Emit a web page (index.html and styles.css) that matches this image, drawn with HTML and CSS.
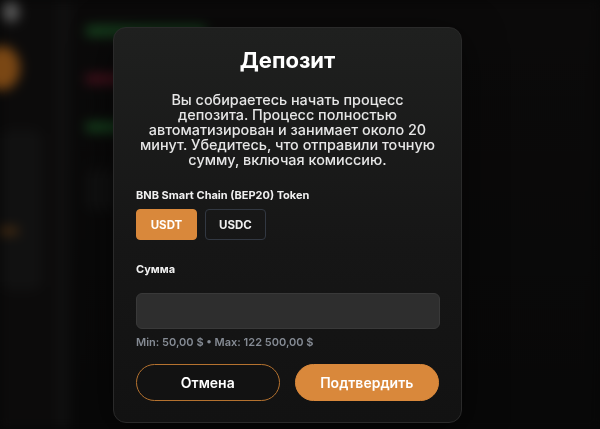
FILE: index.html
```html
<!DOCTYPE html>
<html lang="ru">
<head>
<meta charset="utf-8">
<title>Депозит</title>
<link rel="stylesheet" href="styles.css">
</head>
<body>
<div class="app">
  <aside class="sidebar">
    <div class="avatar"></div>
    <div class="coin"></div>
    <div class="side-card">
      <div class="side-dash"></div>
    </div>
  </aside>
  <div class="divider"></div>
  <main class="main">
    <div class="bar bar-green"></div>
    <div class="bar bar-red"></div>
    <div class="bar bar-green"></div>
    <div class="ghost-box"></div>
  </main>
</div>

<div class="overlay">
  <section class="modal">
    <h1 class="modal-title">Депозит</h1>
    <p class="modal-text">Вы собираетесь начать процесс депозита. Процесс полностью автоматизирован и занимает около 20 минут. Убедитесь, что отправили точную сумму, включая комиссию.</p>

    <div class="field-label">BNB Smart Chain (BEP20) Token</div>
    <div class="token-row">
      <button class="token token-active">USDT</button>
      <button class="token">USDC</button>
    </div>

    <div class="field-label sum-label">Сумма</div>
    <input class="amount" type="text" value="">
    <div class="limits">Min: 50,00 $ • Max: 122 500,00 $</div>

    <div class="actions">
      <button class="btn btn-cancel">Отмена</button>
      <button class="btn btn-confirm">Подтвердить</button>
    </div>
  </section>
</div>
</body>
</html>
```

FILE: styles.css
```css
* { box-sizing: border-box; }

html, body {
  margin: 0;
  padding: 0;
  width: 600px;
  height: 429px;
  overflow: hidden;
  background: #070707;
  font-family: Inter, "Noto Sans", "Liberation Sans", sans-serif;
}

/* blurred page behind the modal */
.app {
  display: flex;
  width: 600px;
  height: 429px;
  filter: blur(6px);
  background: linear-gradient(180deg, #0b0a0a 0%, #080808 100%);
}

.sidebar {
  width: 58px;
  flex: none;
  display: flex;
  flex-direction: column;
  background: #0c0b0b;
}

.avatar {
  width: 16px;
  height: 20px;
  margin: 2px 0 0 3px;
  border-radius: 8px;
  background: #5a5a5a;
}

.coin {
  width: 36px;
  height: 44px;
  margin: 24px 0 0 -16px;
  border-radius: 50%;
  background: #7a4714;
}

.side-card {
  width: 42px;
  height: 160px;
  margin-top: 40px;
  border-radius: 10px;
  background: #111111;
  padding-top: 98px;
}

.side-dash {
  width: 18px;
  height: 6px;
  background: #553312;
}

.divider {
  width: 12px;
  flex: none;
  background: #101010;
}

.main {
  flex: 1;
  display: flex;
  flex-direction: column;
  padding: 26px 0 0 16px;
  gap: 38px;
}

.bar {
  width: 120px;
  height: 10px;
  border-radius: 3px;
}

.bar-green { background: #17461f; }
.bar-red { background: #48111d; }

.ghost-box {
  width: 30px;
  height: 40px;
  border-radius: 6px;
  background: #101010;
}

/* overlay + modal */
.overlay {
  position: fixed;
  inset: 0;
  display: flex;
  align-items: flex-start;
  justify-content: flex-start;
  padding: 27px 0 0 113px;
}

.modal {
  width: 349px;
  height: 396px;
  border-radius: 13px;
  background: linear-gradient(180deg, #1f201f 0%, #161616 55%, #121212 100%);
  border: 1px solid #2a2a2a;
  box-shadow: 0 10px 40px rgba(0, 0, 0, 0.6);
  padding: 18px 22px 0 22px;
  display: flex;
  flex-direction: column;
  color: #f2f2f2;
}

.modal-title {
  margin: 0;
  text-align: center;
  font-size: 22px;
  line-height: 28px;
  font-weight: 700;
  color: #ffffff;
}

.modal-text {
  margin: 18px 0 0 0;
  text-align: center;
  font-size: 14.4px;
  line-height: 15px;
  font-weight: 500;
  color: #e6e6e6;
}

.field-label {
  margin-top: 21px;
  font-size: 11px;
  line-height: 14px;
  font-weight: 700;
  color: #f0f0f0;
}

.token-row {
  display: flex;
  gap: 8px;
  margin-top: 7px;
}

.token {
  width: 61px;
  height: 31px;
  border-radius: 4px;
  border: 1px solid #323842;
  background: transparent;
  color: #f0f0f0;
  font-family: inherit;
  font-size: 11.5px;
  font-weight: 700;
  padding: 0;
}

.token-active {
  background: #d9883b;
  border-color: #d9883b;
  color: #ffffff;
}

.sum-label {
  margin-top: 22px;
}

.amount {
  margin-top: 17px;
  width: 304px;
  height: 36px;
  border-radius: 6px;
  border: 1px solid #393939;
  background: #2e2e2e;
  outline: none;
}

.limits {
  margin-top: 6px;
  font-size: 11px;
  line-height: 14px;
  font-weight: 600;
  color: #858b94;
}

.actions {
  display: flex;
  gap: 15px;
  margin-top: 15px;
}

.btn {
  width: 144px;
  height: 37px;
  border-radius: 19px;
  font-family: inherit;
  font-size: 14px;
  font-weight: 600;
  color: #ffffff;
  padding: 0;
}

.btn-cancel {
  background: #121212;
  border: 1px solid #b5722f;
}

.btn-confirm {
  width: 145px;
  background: #d9883b;
  border: 1px solid #d9883b;
}
```
